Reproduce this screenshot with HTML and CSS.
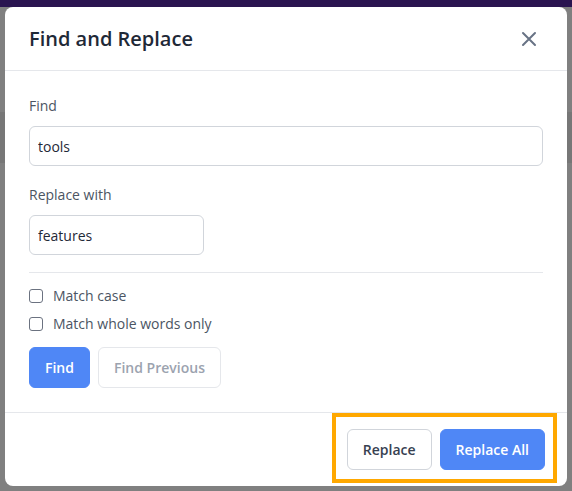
FILE: index.html
```html
<!DOCTYPE html>
<html lang="en">
<head>
<meta charset="utf-8">
<title>Find and Replace</title>
<link rel="stylesheet" href="styles.css">
</head>
<body>
<div class="page">
  <div class="topbar"></div>
  <div class="modal" role="dialog" aria-labelledby="dlg-title">
    <header class="modal-header">
      <h2 id="dlg-title" class="modal-title">Find and Replace</h2>
      <button class="close-btn" aria-label="Close">
        <svg width="16" height="16" viewBox="0 0 16 16" aria-hidden="true">
          <path d="M2 2 L14 14 M14 2 L2 14" stroke="#687385" stroke-width="2" stroke-linecap="round" fill="none"/>
        </svg>
      </button>
    </header>
    <div class="modal-body">
      <div class="field">
        <label class="field-label" for="find">Find</label>
        <input id="find" class="text-input wide" type="text" value="tools">
      </div>
      <div class="field">
        <label class="field-label" for="repl">Replace with</label>
        <input id="repl" class="text-input narrow" type="text" value="features">
      </div>
      <hr class="divider">
      <div class="options">
        <label class="check-row"><span class="checkbox"></span>Match case</label>
        <label class="check-row"><span class="checkbox"></span>Match whole words only</label>
      </div>
      <div class="btn-row">
        <button class="btn btn-primary">Find</button>
        <button class="btn btn-disabled">Find Previous</button>
      </div>
    </div>
    <footer class="modal-footer">
      <button class="btn btn-secondary">Replace</button>
      <button class="btn btn-primary">Replace All</button>
    </footer>
    <div class="highlight"></div>
  </div>
</div>
</body>
</html>
```
FILE: styles.css
```css
* { box-sizing: border-box; }
html, body { margin: 0; padding: 0; }
body {
  font-family: "Open Sans", "Noto Sans", sans-serif;
  background: #7f7f7f;
}
.page {
  width: 572px;
  height: 491px;
  overflow: hidden;
  background: linear-gradient(to bottom, #808080 0, #808080 112px, #777777 112px, #777777 163px, #808080 163px);
}
.topbar {
  height: 7px;
  background: #2a1450;
}
.modal {
  position: relative;
  margin-left: 5px;
  width: 562px;
  height: 479px;
  background: #ffffff;
  border-radius: 8px;
  display: flex;
  flex-direction: column;
}
.modal-header {
  height: 64px;
  border-bottom: 1px solid #e5e7eb;
  display: flex;
  align-items: center;
  justify-content: space-between;
  padding: 0 30px 0 24px;
}
.modal-title {
  margin: 0;
  font-size: 20px;
  font-weight: 600;
  color: #1f2937;
}
.close-btn {
  border: 0;
  background: transparent;
  padding: 0;
  width: 16px;
  height: 16px;
  display: flex;
}
.modal-body {
  padding: 25px 24px 24px;
  border-bottom: 1px solid #e5e7eb;
}
.field { margin-bottom: 19px; }
.field-label {
  display: block;
  font-size: 14px;
  line-height: 20px;
  color: #4b5563;
  margin-bottom: 10px;
}
.text-input {
  display: block;
  height: 40px;
  border: 1px solid #d1d5db;
  border-radius: 6px;
  padding: 0 8px;
  font-family: inherit;
  font-size: 14px;
  color: #1f2937;
  background: #fff;
}
.wide { width: 514px; }
.narrow { width: 175px; }
.divider {
  border: 0;
  border-top: 1px solid #e5e7eb;
  margin: -2px 0 13px;
}
.options {
  display: flex;
  flex-direction: column;
  gap: 8px;
  margin-bottom: 13px;
}
.check-row {
  display: flex;
  align-items: center;
  gap: 10px;
  font-size: 14px;
  line-height: 20px;
  color: #4b5563;
}
.checkbox {
  width: 14px;
  height: 14px;
  border: 1.5px solid #6b7280;
  border-radius: 3px;
  background: #fff;
}
.btn-row {
  display: flex;
  gap: 8px;
}
.btn {
  height: 41px;
  border-radius: 6px;
  font-family: inherit;
  font-size: 14px;
  font-weight: 600;
  padding: 0 15px;
  border: 1px solid transparent;
}
.btn-primary {
  background: #4f87f6;
  color: #ffffff;
  border-color: #4f87f6;
}
.btn-disabled {
  background: #fff;
  color: #9ca3af;
  border-color: #e5e7eb;
}
.btn-secondary {
  background: #fff;
  color: #374151;
  border-color: #d1d5db;
}
.modal-footer {
  flex: 1;
  display: flex;
  justify-content: flex-end;
  align-items: center;
  gap: 8px;
  padding: 0 22px 0;
}
.highlight {
  position: absolute;
  left: 327px;
  top: 406px;
  width: 225px;
  height: 70px;
  border: 4px solid #ffa800;
  pointer-events: none;
}
```
